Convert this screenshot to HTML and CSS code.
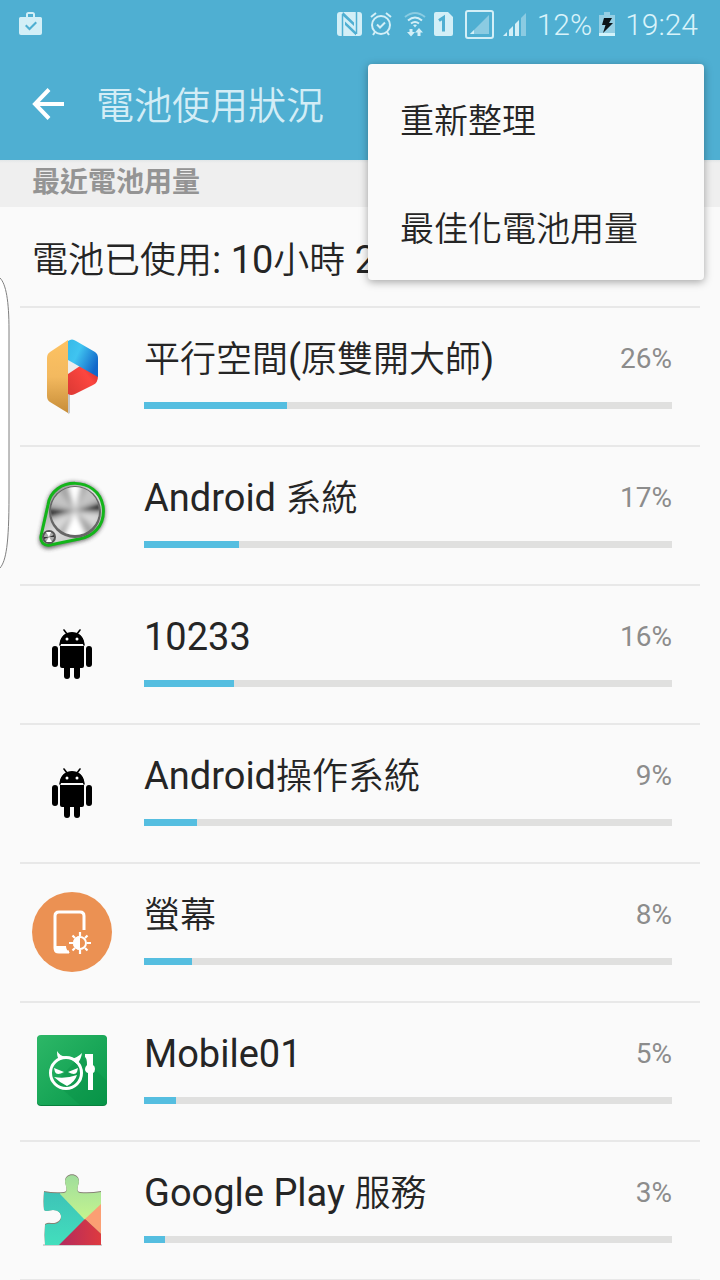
FILE: index.html
```html
<!DOCTYPE html>
<html lang="zh-Hant">
<head>
  <meta charset="UTF-8">
  <meta name="viewport" content="width=device-width, initial-scale=1.0">
  <title>電池使用狀況</title>
  <link rel="stylesheet" href="styles.css">
</head>
<body>
  <div class="screen">
    <!-- Status bar -->
    <div class="status-bar">
      <svg class="status-bag" width="24" height="24" viewBox="0 0 24 24">
        <path fill="#d3eff7" fill-rule="evenodd" d="M7 5V2.500Q7 0 9.500 0h4Q16 0 16 2.500V5h5.500Q23 5 23 6.500V21q0 2-2 2H2q-2 0-2-2V6.500Q0 5 1.500 5zM9 5h5V2H9zM6 14l4.500 4.500L18 11l-1.500-1.500-6 6-3-3z"/>
      </svg>
      <div class="status-right">
        <svg width="25" height="24" viewBox="0 0 25 24">
          <rect width="25" height="24" rx="3" fill="#d3eff7"/>
          <path d="M5.500 24V2M19.500 0v22" fill="none" stroke="#4fafd2" stroke-width="1.500"/>
          <path d="M6 0l11 10.500V14L5 3zM8 9.500L19 20v3.500L8 13z" fill="#4fafd2"/>
        </svg>
        <svg class="gap-alarm" width="22" height="25" viewBox="0 0 22 25" fill="none" stroke="#d3eff7" stroke-width="2">
          <circle cx="11" cy="13" r="9"/>
          <path d="M7 12.500l3 3 5-5M1 5l5-4M21 5l-5-4M5 20l-2 3M17 20l2 3"/>
        </svg>
        <svg class="gap-wifi" width="22" height="26" viewBox="0 0 22 26" fill="none" stroke="#d3eff7" stroke-width="2">
          <path d="M1 6Q11-2 21 6" opacity=".45"/>
          <path d="M4 9.500Q11 3.500 18 9.500M7 12.500q4-3 8 0"/>
          <path d="M9 14q2-1 4 0l-2 2.500z" fill="#d3eff7" stroke="none"/>
          <path d="M5.500 18h3v3H11l-4 4.500L3 21h2.500zM13.500 25h3v-3.500H19L15 17l-4 4.500h2.500z" fill="#d3eff7" stroke="none"/>
        </svg>
        <svg class="gap-sim" width="19" height="24" viewBox="0 0 19 24">
          <path d="M2 0h12l5 5v17q0 2-2 2H2q-2 0-2-2V2q0-2 2-2z" fill="#d3eff7"/>
          <path d="M5 8.500L9.500 5.500V19.500" fill="none" stroke="#4fafd2" stroke-width="3"/>
        </svg>
        <svg class="gap-signal" width="29" height="29" viewBox="0 0 29 29">
          <rect x="1" y="1" width="27" height="27" rx="2" fill="none" stroke="#d3eff7" stroke-width="2"/>
          <path d="M5 24L24 5v19z" fill="#8bcbe2"/>
          <path d="M5 24l4-4v4z" fill="#d3eff7"/>
        </svg>
        <svg class="gap-bars" width="24" height="24" viewBox="0 0 24 24">
          <path d="M0 24l4-4v4zM6 24v-6l4-4v10zM12 24V12l4-4v16z" fill="#d3eff7"/>
          <path d="M18 24V6l5-5v23z" fill="#8bcbe2"/>
        </svg>
        <span class="status-text">12%</span>
        <svg class="gap-battery" width="16" height="24" viewBox="0 0 16 24">
          <path d="M5 0h6v3h5v18H0V3h5z" fill="#95cfe4"/>
          <path d="M0 21h16v3H0z" fill="#d3f3fb"/>
          <path d="M5 6h8l-3 5h4L4 21l2.500-8H3z" fill="#0b1418"/>
        </svg>
        <span class="status-text">19:24</span>
      </div>
    </div>

    <!-- App bar -->
    <header class="app-bar">
      <button class="back" aria-label="返回">
        <svg width="32" height="32" viewBox="0 0 32 32" fill="none" stroke="#fff" stroke-width="4">
          <path d="M17 1.500L3 16l14 14.500M2.500 16H32"/>
        </svg>
      </button>
      <h1>電池使用狀況</h1>
    </header>

    <!-- Overflow menu -->
    <div class="menu">
      <button>重新整理</button>
      <button>最佳化電池用量</button>
    </div>

    <main>
      <h2>最近電池用量</h2>
      <div class="usage">
        <p class="summary"><span class="cjk">電池已使用</span>: 10<span class="cjk">小時</span> 2</p>

        <ul class="apps">
          <li class="app">
            <div class="icon">
              <svg width="80" height="80" viewBox="0 0 80 80">
                <defs>
                  <linearGradient id="gold" x2="0" y2="1"><stop offset="0" stop-color="#fdc262"/><stop offset=".5" stop-color="#f3b95f"/><stop offset="1" stop-color="#c78d38"/></linearGradient>
                  <linearGradient id="blue" x2="1" y2=".6"><stop offset="0" stop-color="#36b9e8"/><stop offset=".4" stop-color="#40c4f0"/><stop offset="1" stop-color="#1267ca"/></linearGradient>
                  <linearGradient id="red" x1="1" x2="0" y2=".7"><stop offset="0" stop-color="#c92b2d"/><stop offset=".4" stop-color="#fc463f"/><stop offset="1" stop-color="#e13b36"/></linearGradient>
                </defs>
                <path d="M36 10h2v67l-2 1z" fill="#c9c9c9"/>
                <path d="M36 23l13 7-13 9z" fill="#ececec"/>
                <path d="M36 38l12-8 18 10q0 7-5 9L43 58q-4 2-7 0z" fill="url(#red)"/>
                <path d="M36 5q4-3 8 0l19 11q3 2 3 6v19L36 24z" fill="url(#blue)"/>
                <path d="M36 4v73L18 66q-3-2-3-6V22q0-4 3-6z" fill="url(#gold)"/>
              </svg>
            </div>
            <div class="info">
              <div class="line"><span class="name"><span class="cjk">平行空間</span>(<span class="cjk">原雙開大師</span>)</span><span class="percent">26%</span></div>
              <progress value="27" max="100" aria-label="平行空間(原雙開大師)"></progress>
            </div>
          </li>
          <li class="app">
            <div class="icon">
              <svg width="80" height="80" viewBox="0 0 80 80">
                <defs>
                  <linearGradient id="plate" x2="1" y2="1"><stop offset="0" stop-color="#777"/><stop offset=".5" stop-color="#ddd"/><stop offset="1" stop-color="#aaa"/></linearGradient>
                  <filter id="soft"><feGaussianBlur stdDeviation="2"/></filter>
                  <filter id="shine"><feGaussianBlur stdDeviation="2.500"/></filter>
                  <clipPath id="knob"><circle cx="43" cy="36" r="24"/></clipPath>
                </defs>
                <path d="M16 31C20 1 66 1 71 32c3 21-12 31-24 33L18 72c-6 1-10-3-9-9z" fill="#333" stroke="#333" stroke-width="3" opacity=".75" filter="url(#soft)"/>
                <path d="M16 30C20 1 66 1 71 31c3 21-12 31-24 33L18 70c-6 1-10-3-9-9z" fill="url(#plate)" stroke="#13b51a" stroke-width="3"/>
                <circle cx="43" cy="37" r="26" fill="#666"/>
                <circle cx="43" cy="36" r="24" fill="#a5a5a5"/>
                <g clip-path="url(#knob)">
                  <g filter="url(#shine)">
                    <path d="M43 36L24 12 15 28zM43 36L57 8l11 16z" fill="#c4c4c4"/>
                    <path d="M43 36L35 8h15zM43 36L30 64h26z" fill="#fff"/>
                    <path d="M43 36L70 28v8zM43 36l-28 6V34z" fill="#2c2c2c"/>
                    <path d="M43 36l27 3-6 16zM43 36L16 46l9 14z" fill="#d8d8d8"/>
                  </g>
                </g>
                <circle cx="17" cy="62" r="7" fill="#555"/>
                <circle cx="17" cy="62" r="5" fill="#aaa"/>
                <path d="M17 62l-3-5h5zM17 62l-3 5h6z" fill="#fff"/>
                <path d="M17 62l5-2v2zM17 62l-5 2v-2z" fill="#333"/>
              </svg>
            </div>
            <div class="info">
              <div class="line"><span class="name">Android <span class="cjk">系統</span></span><span class="percent">17%</span></div>
              <progress value="18" max="100" aria-label="Android 系統"></progress>
            </div>
          </li>
          <li class="app">
            <div class="icon">
              <svg width="80" height="80" viewBox="0 0 80 80">
                <g id="robot">
                  <path d="M28 31q1-8 7-11l-3-4M52 31q-1-8-7-11l3-4" fill="none" stroke="#000" stroke-width="1.600" stroke-linecap="round"/>
                  <path d="M28 30c0-16 24-16 24 0z"/>
                  <path d="M28 32h24v20q0 2-2 2H30q-2 0-2-2z"/>
                  <rect x="20" y="32" width="6" height="21" rx="3"/>
                  <rect x="54" y="32" width="6" height="21" rx="3"/>
                  <rect x="32" y="47" width="6" height="18" rx="3"/>
                  <rect x="42" y="47" width="6" height="18" rx="3"/>
                  <circle cx="35" cy="25" r="1.500" fill="#fff"/>
                  <circle cx="45" cy="25" r="1.500" fill="#fff"/>
                </g>
              </svg>
            </div>
            <div class="info">
              <div class="line"><span class="name">10233</span><span class="percent">16%</span></div>
              <progress value="17" max="100" aria-label="10233"></progress>
            </div>
          </li>
          <li class="app">
            <div class="icon">
              <svg width="80" height="80" viewBox="0 0 80 80"><use href="#robot"/></svg>
            </div>
            <div class="info">
              <div class="line"><span class="name">Android<span class="cjk">操作系統</span></span><span class="percent">9%</span></div>
              <progress value="10" max="100" aria-label="Android操作系統"></progress>
            </div>
          </li>
          <li class="app">
            <div class="icon">
              <svg width="80" height="80" viewBox="0 0 80 80">
                <circle cx="40" cy="40" r="40" fill="#eb9153"/>
                <path d="M52 38V24q0-4-4-4H27q-4 0-4 4v32q0 4 4 4h10" fill="none" stroke="#fff" stroke-width="3"/>
                <path d="M22 54h12q0 4 4 7H26q-4 0-4-4z" fill="#fff"/>
                <circle cx="48" cy="51" r="6" fill="none" stroke="#fff" stroke-width="2"/>
                <path d="M48 44a7 7 0 0 0 0 14z" fill="#fff"/>
                <path d="M48 40v4M48 58v4M37 51h4M55 51h4M40.500 43.500l2.500 2.500M53 56l2.500 2.500M55.500 43.500L53 46M43 56l-2.500 2.500" stroke="#fff" stroke-width="2.200"/>
              </svg>
            </div>
            <div class="info">
              <div class="line"><span class="name"><span class="cjk">螢幕</span></span><span class="percent">8%</span></div>
              <progress value="9" max="100" aria-label="螢幕"></progress>
            </div>
          </li>
          <li class="app">
            <div class="icon">
              <svg width="80" height="80" viewBox="0 0 80 80">
                <defs>
                  <linearGradient id="green" x2="1" y2="1"><stop offset="0" stop-color="#2db767"/><stop offset="1" stop-color="#07984a"/></linearGradient>
                </defs>
                <rect x="5" y="5" width="70" height="70" rx="4" fill="#07813d"/>
                <rect x="5" y="4" width="70" height="70" rx="4" fill="url(#green)"/>
                <path d="M49 24l26 26v20q0 4-4 4H48L23 52z" fill="#078b42" opacity=".3"/>
                <circle cx="34" cy="42" r="15.500" fill="none" stroke="#fff" stroke-width="3"/>
                <path d="M28 29q-3-1-3-9 3 5 8 5.500zM39 28q6-1 11-6-1 7-5 11z" fill="#fff"/>
                <path d="M22 37l10 4q-7 4-9 0zM46 37l-10 4q7 4 9 0z" fill="#fff"/>
                <path d="M22 46q12 2 23-2-2 7-10 11-8-4-13-9z" fill="#fff"/>
                <path d="M53 23h8v11q2 1 2 4t-2 4v17h-5V42q-3-1-3-4 0-2 2-4 0-7-2-8z" fill="#fff"/>
              </svg>
            </div>
            <div class="info">
              <div class="line"><span class="name">Mobile01</span><span class="percent">5%</span></div>
              <progress value="6" max="100" aria-label="Mobile01"></progress>
            </div>
          </li>
          <li class="app">
            <div class="icon">
              <svg width="80" height="80" viewBox="0 0 80 80">
                <defs>
                  <linearGradient id="teal" x2="0" y2="1"><stop offset="0" stop-color="#3bb8b5"/><stop offset="1" stop-color="#43e0bd"/></linearGradient>
                  <linearGradient id="lime" x2="0" y2="1"><stop offset="0" stop-color="#a0dd9c"/><stop offset="1" stop-color="#c4f58e"/></linearGradient>
                  <linearGradient id="crimson" x2="1" y2="0"><stop offset="0" stop-color="#b02a60"/><stop offset="1" stop-color="#df3a3e"/></linearGradient>
                  <path id="piece" d="M12 21q10 2 20 1c5-1 1-7 1-11 0-9 14-9 14 0 0 4-4 10 1 11q10 1 21-1v54H13q-1-10 0-21 3-2 6-1c13 1 13-13 2-13-4 0-6 2-9 0q-1-8 0-19z"/>
                  <clipPath id="puzzle"><use href="#piece"/></clipPath>
                </defs>
                <path d="M11 74h59v2H11z" fill="#d2d2d2"/>
                <use href="#piece" fill="#868274"/>
                <g clip-path="url(#puzzle)">
                  <g clip-path="url(#puzzle)" transform="translate(0 1)">
                    <path d="M10 0h19v20l24 28-27 29H10z" fill="url(#teal)"/>
                    <path d="M29 4h41v30L53 49 28 23z" fill="url(#lime)"/>
                    <path d="M70 32v32L53 48z" fill="#fb9f73"/>
                    <path d="M53 48l17 16v12H25z" fill="url(#crimson)"/>
                  </g>
                </g>
              </svg>
            </div>
            <div class="info">
              <div class="line"><span class="name">Google Play <span class="cjk">服務</span></span><span class="percent">3%</span></div>
              <progress value="4" max="100" aria-label="Google Play 服務"></progress>
            </div>
          </li>
        </ul>
      </div>
    </main>

    <!-- Edge panel handle -->
    <svg class="edge" width="11" height="296" viewBox="0 0 11 296">
      <path d="M0 2C6 8 9 25 9 54V220C9 268 6 285 0 292" fill="#fff" stroke="#808080"/>
    </svg>
  </div>
</body>
</html>
```
FILE: styles.css
```css
* {
  box-sizing: border-box;
}

body {
  margin: 0;
  background-color: #fafafa;
  font-family: Roboto, "Noto Sans CJK TC", sans-serif;
  color: #252525;
}

h1, h2, p, ul {
  margin: 0;
  padding: 0;
}

button {
  background: none;
  border: none;
  padding: 0;
  font-family: inherit;
  color: inherit;
  cursor: pointer;
}

svg {
  display: block;
  flex: none;
}

.screen {
  position: relative;
  height: 100vh;
  overflow: hidden;
}

/* Status bar */
.status-bar {
  display: flex;
  align-items: center;
  justify-content: space-between;
  height: 48px;
  padding: 0 22px 0 19px;
  background-color: #4fafd2;
}

.status-right {
  display: flex;
  align-items: center;
}

.status-text {
  margin-left: 10px;
  padding-top: 2px;
  font-size: 30px;
  font-weight: 300;
  line-height: 46px;
  color: #d9f3fa;
}

.gap-alarm,
.gap-sim {
  margin-left: 8px;
}

.gap-wifi,
.gap-signal {
  margin-left: 12px;
}

.gap-bars {
  margin-left: 9px;
}

.gap-battery {
  margin-left: 7px;
}

/* App bar */
.app-bar {
  display: flex;
  align-items: center;
  gap: 32px;
  height: 112px;
  padding: 0 32px;
  background-color: #4fafd2;
}

h1 {
  padding-top: 4px;
  font-size: 38px;
  font-weight: 350;
  line-height: 48px;
  color: #d3edf6;
}

/* Overflow menu */
.menu {
  position: absolute;
  top: 64px;
  right: 16px;
  z-index: 2;
  display: flex;
  flex-direction: column;
  min-width: 336px;
  background-color: #fafafa;
  border-radius: 4px;
  box-shadow: 0 2px 8px rgba(0, 0, 0, 0.35);
}

.menu button {
  height: 108px;
  padding: 0 32px;
  font-size: 34px;
  font-weight: 350;
  text-align: left;
}

/* Usage list */
h2 {
  height: 47px;
  padding: 0 32px;
  background: linear-gradient(#e2e6e7, #efefef 3px);
  font-size: 28px;
  font-weight: 700;
  line-height: 46px;
  color: #949494;
}

.usage {
  margin: 0 20px;
}

.summary {
  height: 101px;
  padding: 29px 12px 0;
  border-bottom: 2px solid #e8e8e8;
  font-size: 38px;
  line-height: 48px;
  white-space: nowrap;
}

/* Chinese glyphs run slightly smaller and lighter than the Latin ones beside them */
.cjk {
  font-size: 36px;
  font-weight: 350;
}

.apps {
  list-style: none;
}

.app {
  display: flex;
  align-items: center;
  gap: 32px;
  height: 139px;
  padding: 0 28px 2px 12px;
  border-bottom: 2px solid #e8e8e8;
}

.info {
  flex: 1;
  padding-bottom: 8px;
}

.line {
  display: flex;
  align-items: center;
  justify-content: space-between;
  height: 48px;
  margin-bottom: 20px;
}

.name {
  padding-top: 2px;
  font-size: 38px;
  line-height: 48px;
}

.percent {
  font-size: 28px;
  color: #8c8c8c;
}

progress {
  display: block;
  width: 100%;
  height: 7px;
  border: none;
  background-color: #e0e0df;
  appearance: none;
}

progress::-webkit-progress-bar {
  background-color: #e0e0df;
}

progress::-webkit-progress-value {
  background-color: #55bee0;
}

/* Edge panel handle */
.edge {
  position: absolute;
  top: 276px;
  left: 0;
}
```
